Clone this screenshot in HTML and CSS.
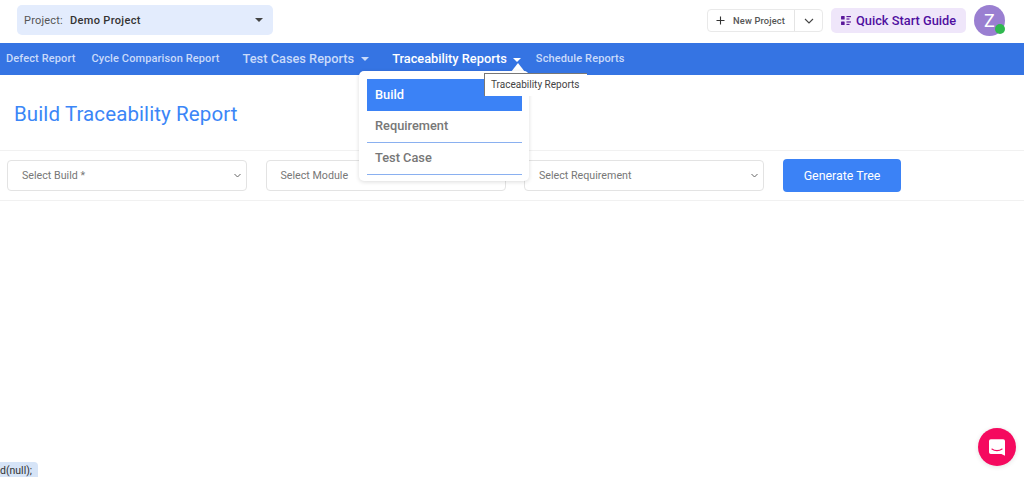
FILE: index.html
```html
<!DOCTYPE html>
<html lang="en">
<head>
<meta charset="utf-8">
<title>Build Traceability Report</title>
<link rel="stylesheet" href="styles.css">
</head>
<body>
<header class="topbar">
  <div class="project">
    <span class="project-label">Project:</span>
    <span class="project-name">Demo Project</span>
    <span class="caret caret-dark"></span>
  </div>
  <div class="top-actions">
    <div class="split">
      <div class="split-main">
        <svg class="plus" width="9" height="9" viewBox="0 0 9 9"><path d="M4.500 .5v8M.5 4.500h8" stroke="#333" stroke-width="1.100" fill="none"/></svg>
        <span>New Project</span>
      </div>
      <div class="split-side">
        <svg width="10" height="6" viewBox="0 0 10 6"><path d="M1 1l4 4 4-4" stroke="#444" stroke-width="1.100" fill="none"/></svg>
      </div>
    </div>
    <div class="guide">
      <svg width="10" height="9" viewBox="0 0 11 10"><g fill="#5a189a"><rect x="0" y="0" width="4" height="4" rx=".6"/><rect x="0" y="6" width="4" height="4" rx=".6"/><rect x="6" y="0" width="5" height="1.300"/><rect x="6" y="2.700" width="3.400" height="1.300"/><rect x="6" y="6" width="5" height="1.300"/><rect x="6" y="8.700" width="3.400" height="1.300"/></g></svg>
      <span>Quick Start Guide</span>
    </div>
    <div class="avatar">Z<span class="online"></span></div>
  </div>
</header>

<nav class="nav">
  <a class="nav-small nav-first">Defect Report</a>
  <a class="nav-small nav-cycle">Cycle Comparison Report</a>
  <a class="nav-big nav-tests">Test Cases Reports<span class="caret caret-dim"></span></a>
  <a class="nav-big nav-active">Traceability Reports<span class="caret caret-white"></span></a>
  <a class="nav-small nav-schedule">Schedule Reports</a>
</nav>

<h1 class="title">Build Traceability Report</h1>

<section class="filters">
  <div class="select"><span>Select Build *</span><svg width="7" height="5" viewBox="0 0 7 5"><path d="M.5 1l3 3 3-3" stroke="#666" stroke-width="1" fill="none"/></svg></div>
  <div class="select"><span>Select Module</span><svg width="7" height="5" viewBox="0 0 7 5"><path d="M.5 1l3 3 3-3" stroke="#666" stroke-width="1" fill="none"/></svg></div>
  <div class="select"><span>Select Requirement</span><svg width="7" height="5" viewBox="0 0 7 5"><path d="M.5 1l3 3 3-3" stroke="#666" stroke-width="1" fill="none"/></svg></div>
  <button class="generate">Generate Tree</button>
</section>

<div class="menu-arrow"></div>
<div class="menu">
  <div class="menu-item menu-item-active">Build</div>
  <div class="menu-item">Requirement</div>
  <div class="menu-item">Test Case</div>
</div>
<div class="tooltip">Traceability Reports</div>

<div class="status">d(null);</div>
<div class="chat">
  <svg width="16" height="17" viewBox="0 0 22 23"><path d="M2.500 0h17A2.500 2.500 0 0 1 22 2.500V23l-5-2.500H2.500A2.500 2.500 0 0 1 0 18V2.500A2.500 2.500 0 0 1 2.500 0z" fill="#fff"/><path d="M4 13.500c4 3 10 3 14 0" stroke="#f50a5f" stroke-width="1.500" fill="none" stroke-linecap="round"/></svg>
</div>
</body>
</html>
```
FILE: styles.css
```css
* { box-sizing: border-box; }
html, body { margin: 0; height: 477px; overflow: hidden; }
body { position: relative; background: #fff; font-family: Roboto, "Liberation Sans", sans-serif; color: #333; }

.topbar { height: 43px; display: flex; align-items: flex-start; justify-content: space-between; padding: 5px 19px 0 17px; }
.project { width: 256px; height: 30px; background: #e3ecfd; border-radius: 5px; display: flex; align-items: center; padding: 0 10px 0 7px; font-size: 11px; letter-spacing: .2px; }
.project-label { color: #555; font-size: 11px; margin-right: 7px; }
.project-name { color: #333; font-weight: 500; flex: 1; letter-spacing: .35px; }

.caret { display: inline-block; width: 0; height: 0; border-left: 4px solid transparent; border-right: 4px solid transparent; border-top: 4px solid; }
.caret-dark { border-top-color: #444; }
.caret-dim { border-top-color: #c9dafa; margin-left: 7px; vertical-align: 2px; }
.caret-white { border-top-color: #fff; margin-left: 6px; vertical-align: 1px; }

.top-actions { display: flex; align-items: flex-start; }
.split { display: flex; height: 23px; width: 116px; margin-top: 4px; border: 1px solid #e9e9e9; border-radius: 4px; font-size: 9.300px; font-weight: 500; color: #555; letter-spacing: .15px; }
.split-main { flex: 1; display: flex; align-items: center; padding-left: 8px; border-right: 1px solid #e4e4e4; }
.plus { margin-right: 8px; }
.split-side { width: 27px; display: flex; align-items: center; justify-content: center; }
.guide { margin: 3px 0 0 8px; height: 25px; width: 135px; background: #efe6fa; border-radius: 5px; display: flex; align-items: center; padding-left: 10px; gap: 5px; color: #4f0fa0; font-size: 12.800px; font-weight: 500; white-space: nowrap; }
.avatar { position: relative; margin-left: 8px; width: 31px; height: 31px; border-radius: 50%; background: #9a7fd1; color: #fff; font-size: 18px; font-weight: 400; display: flex; align-items: center; justify-content: center; }
.online { position: absolute; right: 0; bottom: 2px; width: 10px; height: 10px; border-radius: 50%; background: #2fb84f; }

.nav { height: 32px; padding-bottom: 2px; background: #3574e3; display: flex; align-items: center; white-space: nowrap; }
.nav a { display: block; }
.nav-small { font-size: 11px; font-weight: 500; color: #c9dafa; letter-spacing: .12px; }
.nav-big { font-size: 12.800px; font-weight: 500; color: #c9dafa; }
.nav-first { margin-left: 6px; }
.nav-cycle { margin-left: 16px; }
.nav-tests { margin-left: 23px; }
.nav-active { margin-left: 23px; color: #fff; }
.nav-schedule { margin-left: 15px; }

.title { margin: 0; padding: 27px 0 0 14px; height: 75px; font-size: 20.500px; font-weight: 400; color: #3b86f7; line-height: 24px; letter-spacing: .1px; }

.filters { height: 51px; border-top: 1px solid #f1f1f1; border-bottom: 1px solid #f1f1f1; display: flex; align-items: center; padding-left: 7px; gap: 18.500px; }
.select { width: 240px; height: 31px; border: 1px solid #e3e3e3; border-radius: 4px; display: flex; align-items: center; justify-content: space-between; padding: 0 5px 0 14px; font-size: 10.700px; color: #777; }
.generate { width: 118px; height: 33px; margin-left: .5px; border: 0; border-radius: 4px; background: #3b82f6; color: #fff; font-family: inherit; font-size: 12.400px; font-weight: 400; }

.menu { position: absolute; left: 359px; top: 71px; width: 170px; height: 110px; background: #fff; border-radius: 5px; box-shadow: 0 1px 4px rgba(0,0,0,.14); padding: 8px 8px 0; }
.menu-item { height: 32px; padding-left: 8px; margin-bottom: -1px; border-bottom: 1px solid #8ab0f0; font-size: 12.800px; font-weight: 500; line-height: 30px; color: #777; width: 155px; }
.menu-item + .menu-item { margin-top: 1px; }
.menu-item-active { background: #3b82f6; color: #fff; font-weight: 500; border-bottom: 0; line-height: 31px; }
.menu-arrow { position: absolute; left: 511px; top: 63px; width: 0; height: 0; border-left: 7px solid transparent; border-right: 7px solid transparent; border-bottom: 9px solid #fff; }
.tooltip { position: absolute; left: 484px; top: 73px; width: 103px; height: 23px; background: #fff; border: 1px solid #777; border-width: 1px 0 0 1px; font-size: 10px; line-height: 21px; padding-left: 6px; color: #444; white-space: nowrap; }

.status { position: absolute; left: 0; bottom: 0; height: 15px; width: 38px; background: #d6e4f7; border-top-right-radius: 4px; font-size: 10.500px; line-height: 17px; color: #333; }
.chat { position: absolute; left: 978px; top: 428px; width: 38px; height: 38px; border-radius: 50%; background: #f50a5f; display: flex; align-items: center; justify-content: center; padding-top: 1px; box-shadow: 0 1px 5px rgba(0,0,0,.12); }
```
